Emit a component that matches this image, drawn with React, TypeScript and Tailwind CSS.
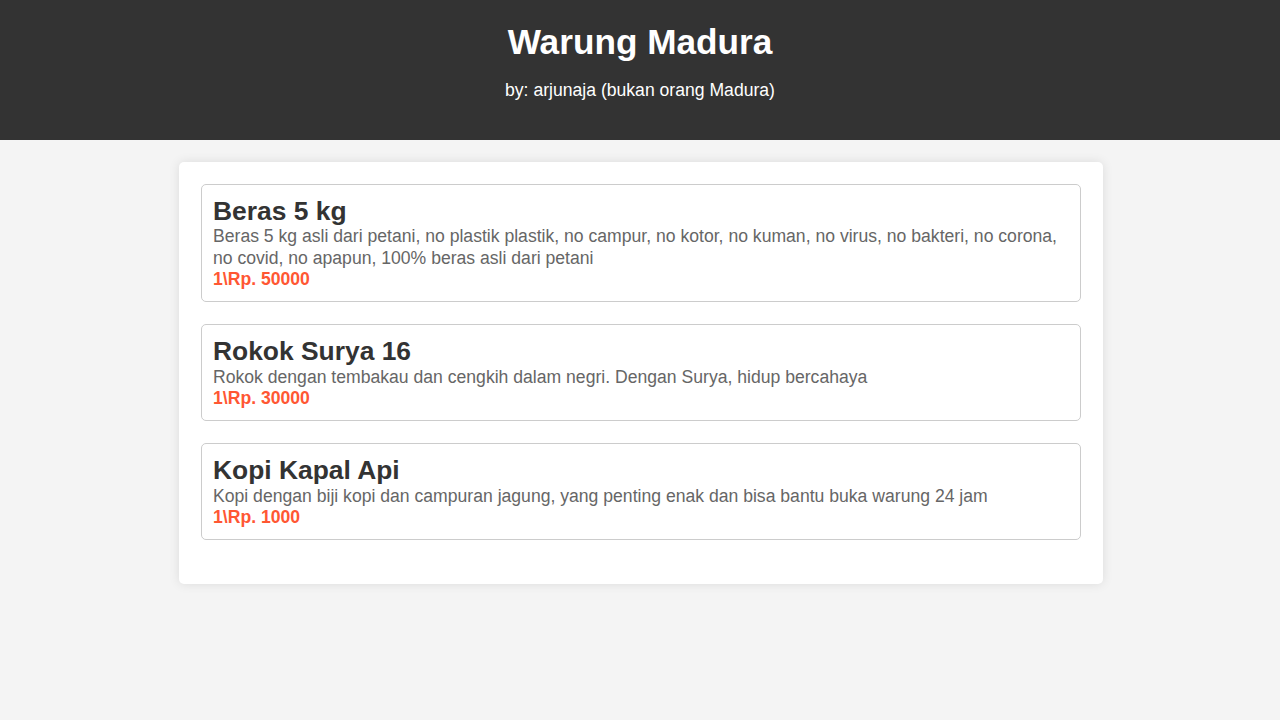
import React from "react";

const items = [
  {
    name: "Beras 5 kg",
    desc: "Beras 5 kg asli dari petani, no plastik plastik, no campur, no kotor, no kuman, no virus, no bakteri, no corona, no covid, no apapun, 100% beras asli dari petani",
    price: "1\\Rp. 50000",
  },
  {
    name: "Rokok Surya 16",
    desc: "Rokok dengan tembakau dan cengkih dalam negri. Dengan Surya, hidup bercahaya",
    price: "1\\Rp. 30000",
  },
  {
    name: "Kopi Kapal Api",
    desc: "Kopi dengan biji kopi dan campuran jagung, yang penting enak dan bisa bantu buka warung 24 jam",
    price: "1\\Rp. 1000",
  },
];

export default function App() {
  return (
    <div
      className="min-h-[720px] bg-[#f4f4f4] overflow-hidden"
      style={{ fontFamily: '"Liberation Sans", Arial, sans-serif' }}
    >
      <header className="bg-[#333333] text-white text-center pt-[22px] pb-[22px] h-[140px]">
        <h1 className="m-0 text-[35.2px] leading-[40.5px] font-bold">Warung Madura</h1>
        <p className="my-[17.6px] text-[17.6px] leading-[20.24px]">by: arjunaja (bukan orang Madura)</p>
      </header>
      <main className="w-[924px] ml-[179px] mt-[22px] bg-white rounded-[5px] p-[22px] shadow-[0_0_11px_rgba(0,0,0,0.1)]">
        {items.map((it) => (
          <div
            key={it.name}
            className="border border-[#cccccc] rounded-[5px] px-[11px] py-[11px] mb-[22px]"
          >
            <h2 className="m-0 text-[26.4px] leading-[30.4px] font-bold text-[#333333]">{it.name}</h2>
            <p className="m-0 text-[17.6px] leading-[21.5px] text-[#666666]">{it.desc}</p>
            <p className="m-0 text-[17.6px] leading-[21px] font-bold text-[#ff5733]">{it.price}</p>
          </div>
        ))}
      </main>
    </div>
  );
}
